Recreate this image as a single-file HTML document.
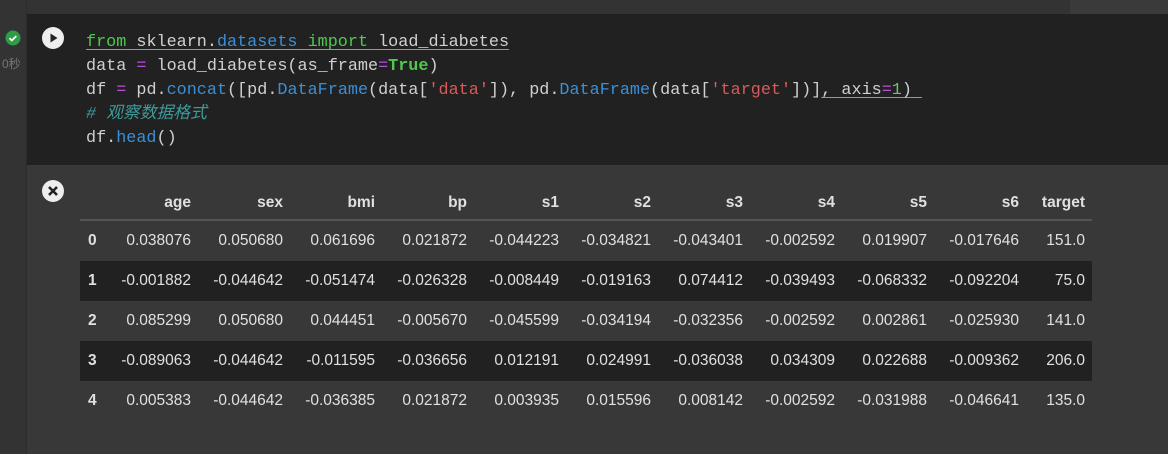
<!DOCTYPE html>
<html><head><meta charset="utf-8"><style>
body{margin:0;width:1168px;height:454px;background:#383838;overflow:hidden;position:relative;font-family:"Liberation Sans",sans-serif}
.gut{position:absolute;left:0;top:0;width:26px;height:454px;background:#333;border-right:1px solid #2c2c2c}
.top{position:absolute;left:27px;top:0;width:1141px;height:14px;background:#333}
.code{position:absolute;left:27px;top:14px;width:1141px;height:151px;background:#212121}
pre{position:absolute;left:86px;top:31px;margin:0;font-family:"Liberation Mono","Noto Sans CJK SC",monospace;font-size:16.8px;line-height:24px;color:#d0d0d0}
.k{color:#4ec94e}.b{color:#3b8fd6}.s{color:#d85a5a}.c{color:#3e9a9a;font-style:italic}.p{color:#b34fd8}.g{color:#6ac46a}
.u{text-decoration:underline;text-decoration-color:#e88a00;text-underline-offset:3px}
table{position:absolute;left:80px;top:186px;border-collapse:collapse;font-size:15.5px;color:#e0e0e0}
th{font-weight:bold;text-align:right;height:33px;padding:0;border-bottom:2px solid #555}
td{height:40px;text-align:right;padding:0}
tr.d td,tr.d th{background:#212121}
tbody th{border:none;text-align:left;padding-left:8px;height:40px}
</style></head><body>
<div class="gut"></div><div class="top"></div>
<div style="position:absolute;left:1070px;top:0;width:98px;height:24px;background:#3a3a3a;border-radius:0 0 0 3px"></div>
<div class="code"></div>
<svg style="position:absolute;left:5px;top:30px" width="16" height="16"><circle cx="8" cy="8" r="7.5" fill="#2e9e46"/><path d="M4.5 8.2l2.3 2.2 4.5-4.3" stroke="#fff" stroke-width="1.8" fill="none"/></svg>
<div style="position:absolute;left:2px;top:55px;font-size:12px;color:#777;font-family:'Liberation Sans','Noto Sans CJK SC',sans-serif">0秒</div>
<svg style="position:absolute;left:41px;top:26px" width="24" height="24"><circle cx="12" cy="12" r="11" fill="#eee"/><path d="M9.5 7.5v9l7-4.5z" fill="#222"/></svg>
<svg style="position:absolute;left:41px;top:179px" width="24" height="24"><circle cx="12" cy="12" r="11" fill="#eee"/><path d="M8 8l8 8M16 8l-8 8" stroke="#222" stroke-width="2.6"/></svg>
<pre><span class="k u">from</span><span class="u"> sklearn.</span><span class="b u">datasets</span><span class="u"> </span><span class="k u">import</span><span class="u"> load_diabetes</span>
data <span class="p">=</span> load_diabetes(as_frame<span class="p">=</span><span class="k" style="font-weight:bold">True</span>)
df <span class="p">=</span> pd.<span class="b">concat</span>([pd.<span class="b">DataFrame</span>(data[<span class="s">'data'</span>]), pd.<span class="b">DataFrame</span>(data[<span class="s">'target'</span>])]<span class="u">, axis<span class="p">=</span><span class="g">1</span>) </span>
<span class="c"># 观察数据格式</span>
df.<span class="b">head</span>()</pre>
<table>
<colgroup><col style="width:23px"><col style="width:88px"><col style="width:92px"><col style="width:92px"><col style="width:92px"><col style="width:92px"><col style="width:92px"><col style="width:92px"><col style="width:92px"><col style="width:92px"><col style="width:92px"><col style="width:73px"></colgroup>
<thead><tr><th></th><th>age</th><th>sex</th><th>bmi</th><th>bp</th><th>s1</th><th>s2</th><th>s3</th><th>s4</th><th>s5</th><th>s6</th><th style="padding-right:7px">target</th></tr></thead>
<tbody>
<tr><th>0</th><td>0.038076</td><td>0.050680</td><td>0.061696</td><td>0.021872</td><td>-0.044223</td><td>-0.034821</td><td>-0.043401</td><td>-0.002592</td><td>0.019907</td><td>-0.017646</td><td style="padding-right:7px">151.0</td></tr>
<tr class="d"><th>1</th><td>-0.001882</td><td>-0.044642</td><td>-0.051474</td><td>-0.026328</td><td>-0.008449</td><td>-0.019163</td><td>0.074412</td><td>-0.039493</td><td>-0.068332</td><td>-0.092204</td><td style="padding-right:7px">75.0</td></tr>
<tr><th>2</th><td>0.085299</td><td>0.050680</td><td>0.044451</td><td>-0.005670</td><td>-0.045599</td><td>-0.034194</td><td>-0.032356</td><td>-0.002592</td><td>0.002861</td><td>-0.025930</td><td style="padding-right:7px">141.0</td></tr>
<tr class="d"><th>3</th><td>-0.089063</td><td>-0.044642</td><td>-0.011595</td><td>-0.036656</td><td>0.012191</td><td>0.024991</td><td>-0.036038</td><td>0.034309</td><td>0.022688</td><td>-0.009362</td><td style="padding-right:7px">206.0</td></tr>
<tr><th>4</th><td>0.005383</td><td>-0.044642</td><td>-0.036385</td><td>0.021872</td><td>0.003935</td><td>0.015596</td><td>0.008142</td><td>-0.002592</td><td>-0.031988</td><td>-0.046641</td><td style="padding-right:7px">135.0</td></tr>
</tbody></table>
</body></html>
